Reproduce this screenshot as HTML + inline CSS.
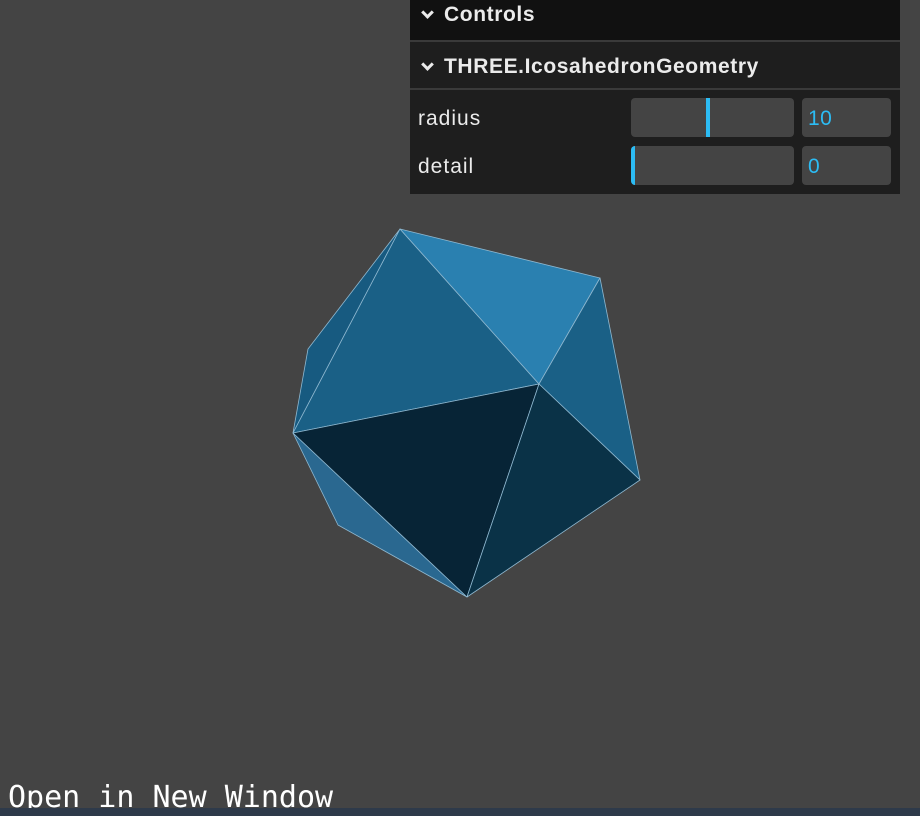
<!DOCTYPE html>
<html><head><style>
body{margin:0;width:920px;height:816px;background:#444;position:relative;overflow:hidden;font-family:"Liberation Sans",sans-serif}
.p{position:absolute;left:410px;top:0;width:490px;height:194px;background:#1e1e1e}
.h1{position:absolute;left:0;top:0;width:490px;height:40px;background:#111}
.ln{position:absolute;left:0;width:490px;height:2px;background:#3a3a3a}
.t{position:absolute;color:#ebebeb;font-size:21px;font-weight:bold;letter-spacing:0.6px}
.l{position:absolute;color:#ebebeb;font-size:21px;letter-spacing:1px;left:8px}
.s{position:absolute;left:221px;width:163px;height:39px;background:#444;border-radius:4px;overflow:hidden}
.i{position:absolute;left:392px;width:89px;height:39px;background:#444;border-radius:4px;color:#2cbcf4;font-size:21px;letter-spacing:0.5px;line-height:41px;padding-left:6px;box-sizing:border-box}
.k{position:absolute;top:0;width:4px;height:39px;background:#2cbcf4}
.chev{position:absolute;width:6px;height:6px;border-right:3px solid #ebebeb;border-bottom:3px solid #ebebeb;transform:rotate(45deg)}
</style></head><body>
<div class="p">
<div class="h1"></div>
<div class="chev" style="left:13px;top:8px"></div>
<div class="t" style="left:34px;top:3px">Controls</div>
<div class="ln" style="top:40px"></div>
<div class="chev" style="left:13px;top:60px"></div>
<div class="t" style="left:34px;top:55px">THREE.IcosahedronGeometry</div>
<div class="ln" style="top:88px"></div>
<div class="l" style="top:107px">radius</div>
<div class="s" style="top:98px"><div class="k" style="left:75px"></div></div>
<div class="i" style="top:98px">10</div>
<div class="l" style="top:155px">detail</div>
<div class="s" style="top:146px"><div class="k" style="left:0"></div></div>
<div class="i" style="top:146px">0</div>
</div>
<svg width="920" height="816" style="position:absolute;left:0;top:0" stroke="#8fb8d0" stroke-width="0.8" stroke-linejoin="round">
<polygon points="400,229 308,349 293,433" fill="#175a80"/>
<polygon points="293,433 338,525 467,597" fill="#2a6890"/>
<polygon points="293,433 400,229 539,384" fill="#1a6086"/>
<polygon points="400,229 600,278 539,384" fill="#2a80b0"/>
<polygon points="600,278 640,480 539,384" fill="#1a6086"/>
<polygon points="293,433 539,384 467,597" fill="#072436"/>
<polygon points="539,384 640,480 467,597" fill="#0a3247"/>
</svg>
<div style="position:absolute;left:8px;top:780px;font-family:'DejaVu Sans Mono','Liberation Mono',monospace;font-size:30px;color:#fff;line-height:36px">Open in New Window</div>
<div style="position:absolute;left:0;top:808px;width:920px;height:8px;background:#2e3a4a"></div>
</body></html>
